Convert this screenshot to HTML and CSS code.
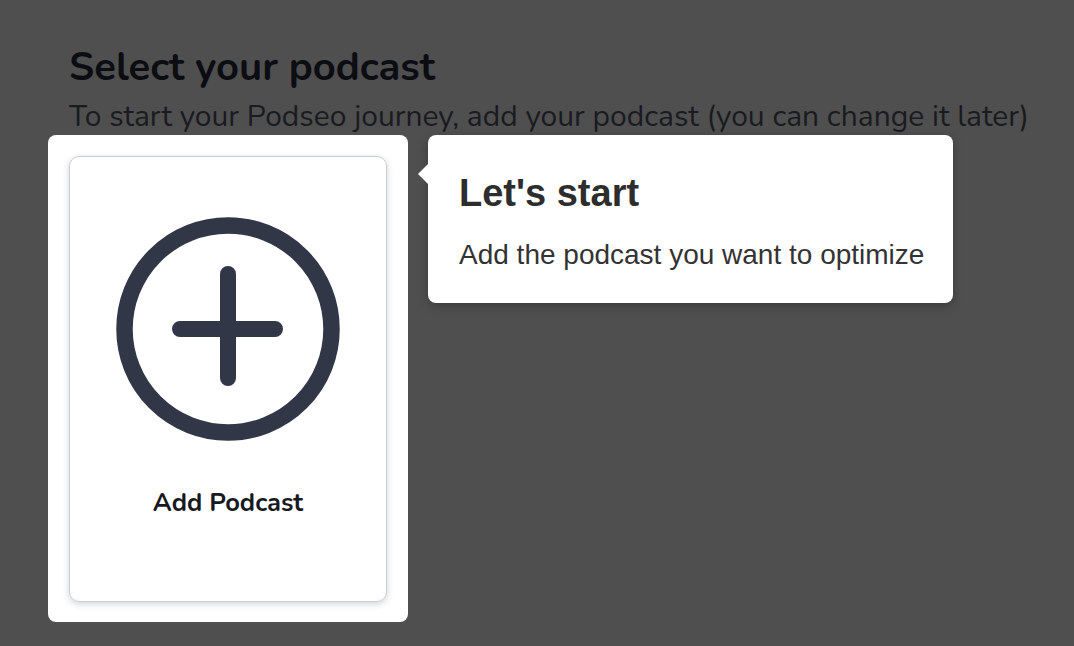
FILE: index.html
```html
<!DOCTYPE html>
<html>
<head>
<meta charset="utf-8">
<link rel="stylesheet" href="styles.css">
</head>
<body>
<main class="page">
  <h1 class="title">Select your podcast</h1>
  <p class="subtitle">To start your Podseo journey, add your podcast (you can change it later)</p>
  <div class="stage">
    <div class="spotlight">
      <div class="card">
        <svg class="plus-icon" width="226" height="226" viewBox="0 0 226 226" aria-hidden="true">
          <circle cx="113" cy="113" r="103.5" fill="none" stroke="#323748" stroke-width="16.5"/>
          <path d="M65 113H160M113 58V162" fill="none" stroke="#323748" stroke-width="16" stroke-linecap="round"/>
        </svg>
        <span class="card-label">Add Podcast</span>
      </div>
    </div>
    <div class="tooltip">
      <h2 class="tooltip-title">Let's start</h2>
      <p class="tooltip-text">Add the podcast you want to optimize</p>
    </div>
  </div>
</main>
</body>
</html>
```
FILE: styles.css
```css
html, body {
  margin: 0;
  padding: 0;
}
body {
  background: #4f4f4f;
  width: 1074px;
  height: 646px;
  overflow: hidden;
}
.page {
  padding: 43px 0 0 69px;
  font-family: "Nunito", "Lato", "Open Sans", sans-serif;
}
.title {
  margin: 0 0 5px;
  font-size: 40px;
  font-weight: 700;
  line-height: 48px;
  color: #0c0d12;
}
.subtitle {
  margin: 0 0 -3px;
  font-size: 30px;
  line-height: 42px;
  color: #1a1b20;
  white-space: nowrap;
}
.stage {
  position: relative;
  margin-left: -21px;
}
.spotlight {
  width: 360px;
  height: 487px;
  box-sizing: border-box;
  padding: 21px 21px 20px;
  background: #fff;
  border-radius: 8px;
}
.card {
  height: 100%;
  box-sizing: border-box;
  border: 1px solid #c9cdda;
  border-radius: 10px;
  box-shadow: 0 2px 6px rgba(50, 55, 80, 0.22);
  display: flex;
  flex-direction: column;
  align-items: center;
  padding-top: 59px;
}
.plus-icon {
  display: block;
}
.card-label {
  margin-top: 43px;
  font-size: 25.5px;
  font-weight: 700;
  color: #171922;
}
.tooltip {
  position: absolute;
  left: 380px;
  top: 0;
  width: 525px;
  height: 168px;
  box-sizing: border-box;
  padding: 36px 20px 0 31px;
  background: #fff;
  border-radius: 8px;
  box-shadow: 0 3px 10px rgba(0,0,0,0.25);
  font-family: "Liberation Sans", Arial, sans-serif;
  color: #333;
}
.tooltip::before {
  content: "";
  position: absolute;
  left: -10px;
  top: 29px;
  width: 0;
  height: 0;
  border-top: 10px solid transparent;
  border-bottom: 10px solid transparent;
  border-right: 10px solid #fff;
}
.tooltip-title {
  margin: 0;
  font-size: 38px;
  font-weight: 700;
  line-height: 44px;
  color: #2d2d2d;
}
.tooltip-text {
  margin: 23px 0 0;
  font-size: 28px;
  line-height: 34px;
  color: #333;
  white-space: nowrap;
}
```
